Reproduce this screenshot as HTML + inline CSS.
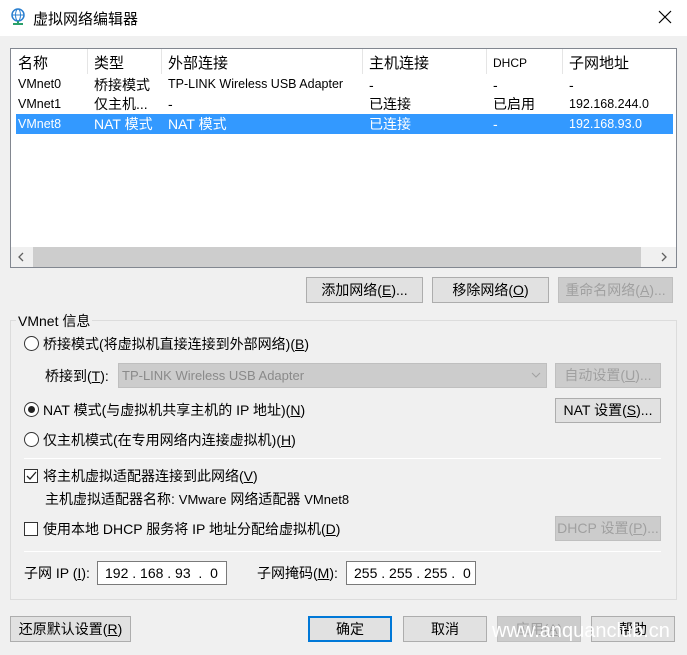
<!DOCTYPE html>
<html><head><meta charset="utf-8"><style>
*{box-sizing:border-box;margin:0;padding:0}
body{width:687px;height:655px;background:#f0f0f0;font-family:"Liberation Sans","Microsoft YaHei","Noto Sans CJK SC",sans-serif;font-size:14px;color:#000;position:relative;overflow:hidden}
.a{position:absolute;white-space:nowrap}
.btn{position:absolute;background:#e1e1e1;border:1px solid #adadad;text-align:center;font-size:14px}
.dis{color:#a0a0a0;background:#ccc;border-color:#bfbfbf}
.radio{position:absolute;width:15px;height:15px;border:1px solid #333;border-radius:50%;background:#fff}
.chk{position:absolute;width:14px;height:14px;border:1px solid #333;background:#fff}
.sep{position:absolute;height:1px;background:#a0a0a0;border-bottom:1px solid #fff}
.inp{position:absolute;background:#fff;border:1px solid #7a7a7a;padding-left:7px;font-size:14px}
u{text-decoration:underline}
</style></head><body>
<div class="a" style="left:0;top:0;width:687px;height:36px;background:#fff"></div>
<svg class="a" style="left:10px;top:8px" width="16" height="18" viewBox="0 0 16 18"><circle cx="8" cy="7" r="6" fill="none" stroke="#2a7fd0" stroke-width="1.5"/><ellipse cx="8" cy="7" rx="2.5" ry="6" fill="none" stroke="#2a7fd0"/><line x1="2" y1="7" x2="14" y2="7" stroke="#2a7fd0"/><rect x="3" y="15" width="10" height="2" fill="#2aa06a"/><rect x="7" y="13" width="2" height="3" fill="#2aa06a"/></svg>
<div class="a" style="left:33px;top:8px;font-size:15px">虚拟网络编辑器</div>
<svg class="a" style="left:658px;top:10px" width="14" height="14"><path d="M1 1L13 13M13 1L1 13" stroke="#000" stroke-width="1.2"/></svg>

<div class="a" style="left:10px;top:48px;width:667px;height:220px;background:#fff;border:1px solid #828790"></div>
<div class="a" style="left:87px;top:49px;width:1px;height:25px;background:#e5e5e5"></div>
<div class="a" style="left:161px;top:49px;width:1px;height:25px;background:#e5e5e5"></div>
<div class="a" style="left:362px;top:49px;width:1px;height:25px;background:#e5e5e5"></div>
<div class="a" style="left:486px;top:49px;width:1px;height:25px;background:#e5e5e5"></div>
<div class="a" style="left:562px;top:49px;width:1px;height:25px;background:#e5e5e5"></div>
<div class="a" style="left:18px;top:52px;font-size:15px">名称</div>
<div class="a" style="left:94px;top:52px;font-size:15px">类型</div>
<div class="a" style="left:168px;top:52px;font-size:15px">外部连接</div>
<div class="a" style="left:369px;top:52px;font-size:15px">主机连接</div>
<div class="a" style="left:493px;top:56px;font-size:12px">DHCP</div>
<div class="a" style="left:569px;top:52px;font-size:15px">子网地址</div>

<div class="a" style="left:18px;top:77px;font-size:12.5px">VMnet0</div>
<div class="a" style="left:94px;top:75px">桥接模式</div>
<div class="a" style="left:168px;top:77px;font-size:12.5px">TP-LINK Wireless USB Adapter</div>
<div class="a" style="left:369px;top:77px">-</div><div class="a" style="left:493px;top:77px">-</div><div class="a" style="left:569px;top:77px">-</div>
<div class="a" style="left:18px;top:97px;font-size:12.5px">VMnet1</div>
<div class="a" style="left:94px;top:94px">仅主机...</div>
<div class="a" style="left:168px;top:96px">-</div>
<div class="a" style="left:369px;top:94px">已连接</div>
<div class="a" style="left:493px;top:94px">已启用</div>
<div class="a" style="left:569px;top:97px;font-size:12.5px">192.168.244.0</div>
<div class="a" style="left:16px;top:114px;width:657px;height:20px;background:#3399ff"></div>
<div class="a" style="left:18px;top:117px;font-size:12.5px;color:#fff">VMnet8</div>
<div class="a" style="left:94px;top:114px;color:#fff">NAT 模式</div>
<div class="a" style="left:168px;top:114px;color:#fff">NAT 模式</div>
<div class="a" style="left:369px;top:114px;color:#fff">已连接</div>
<div class="a" style="left:493px;top:116px;color:#fff">-</div>
<div class="a" style="left:569px;top:117px;font-size:12.5px;color:#fff">192.168.93.0</div>
<div class="a" style="left:11px;top:247px;width:665px;height:20px;background:#f0f0f0"></div>
<div class="a" style="left:33px;top:247px;width:608px;height:20px;background:#cdcdcd"></div>
<svg class="a" style="left:17px;top:252px" width="8" height="10"><path d="M6 1L2 5L6 9" stroke="#606060" fill="none" stroke-width="1.3"/></svg>
<svg class="a" style="left:660px;top:252px" width="8" height="10"><path d="M2 1L6 5L2 9" stroke="#606060" fill="none" stroke-width="1.3"/></svg>

<div class="btn" style="left:306px;top:277px;width:117px;height:26px;line-height:24px">添加网络(<u>E</u>)...</div>
<div class="btn" style="left:432px;top:277px;width:117px;height:26px;line-height:24px">移除网络(<u>O</u>)</div>
<div class="btn dis" style="left:558px;top:277px;width:115px;height:26px;line-height:24px">重命名网络(<u>A</u>)...</div>

<div class="a" style="left:10px;top:320px;width:667px;height:280px;border:1px solid #dcdcdc"></div>
<div class="a" style="left:16px;top:311px;background:#f0f0f0;padding:0 2px">VMnet 信息</div>

<div class="radio" style="left:24px;top:336px"></div>
<div class="a" style="left:43px;top:334px">桥接模式(将虚拟机直接连接到外部网络)(<u>B</u>)</div>
<div class="a" style="left:45px;top:366px">桥接到(<u>T</u>):</div>
<div class="a" style="left:118px;top:363px;width:429px;height:25px;background:#ccc;border:1px solid #bfbfbf;color:#8a8a8a;padding:4px 3px;font-size:13px">TP-LINK Wireless USB Adapter</div>
<svg class="a" style="left:531px;top:372px" width="10" height="7"><path d="M1 1L5 5L9 1" stroke="#a0a0a0" fill="none"/></svg>
<div class="btn dis" style="left:555px;top:363px;width:106px;height:25px;line-height:23px">自动设置(<u>U</u>)...</div>

<div class="radio" style="left:24px;top:402px"></div>
<div class="a" style="left:28px;top:406px;width:7px;height:7px;border-radius:50%;background:#222"></div>
<div class="a" style="left:43px;top:400px">NAT 模式(与虚拟机共享主机的 IP 地址)(<u>N</u>)</div>
<div class="btn" style="left:555px;top:398px;width:106px;height:25px;line-height:23px">NAT 设置(<u>S</u>)...</div>

<div class="radio" style="left:24px;top:432px"></div>
<div class="a" style="left:43px;top:430px">仅主机模式(在专用网络内连接虚拟机)(<u>H</u>)</div>
<div class="sep" style="left:24px;top:458px;width:637px"></div>

<div class="chk" style="left:24px;top:469px"></div>
<svg class="a" style="left:26px;top:471px" width="11" height="10"><path d="M1 5L4 8L10 1" stroke="#222" fill="none" stroke-width="1.3"/></svg>
<div class="a" style="left:43px;top:466px">将主机虚拟适配器连接到此网络(<u>V</u>)</div>
<div class="a" style="left:45px;top:489px">主机虚拟适配器名称: <span style="font-size:13px">VMware</span> 网络适配器 <span style="font-size:13px">VMnet8</span></div>

<div class="chk" style="left:24px;top:522px"></div>
<div class="a" style="left:43px;top:519px">使用本地 DHCP 服务将 IP 地址分配给虚拟机(<u>D</u>)</div>
<div class="btn dis" style="left:555px;top:516px;width:106px;height:25px;line-height:23px">DHCP 设置(<u>P</u>)...</div>
<div class="sep" style="left:24px;top:551px;width:637px"></div>

<div class="a" style="left:24px;top:563px">子网 IP (<u>I</u>):</div>
<div class="inp" style="left:97px;top:561px;width:130px;height:24px;line-height:22px">192 . 168 . 93 &nbsp;. &nbsp;0</div>
<div class="a" style="left:257px;top:563px">子网掩码(<u>M</u>):</div>
<div class="inp" style="left:346px;top:561px;width:130px;height:24px;line-height:22px">255 . 255 . 255 . &nbsp;0</div>

<div class="btn" style="left:10px;top:616px;width:121px;height:26px;line-height:24px">还原默认设置(<u>R</u>)</div>
<div class="btn" style="left:308px;top:616px;width:84px;height:26px;line-height:22px;border:2px solid #0078d7">确定</div>
<div class="btn" style="left:403px;top:616px;width:84px;height:26px;line-height:24px">取消</div>
<div class="btn dis" style="left:497px;top:616px;width:84px;height:26px;line-height:24px">应用(<u>A</u>)</div>
<div class="btn" style="left:591px;top:616px;width:84px;height:26px;line-height:24px">帮助</div>
<div class="a" style="left:492px;top:620px;font-size:20px;color:#fff">www.anquanclub.cn</div>
</body></html>
